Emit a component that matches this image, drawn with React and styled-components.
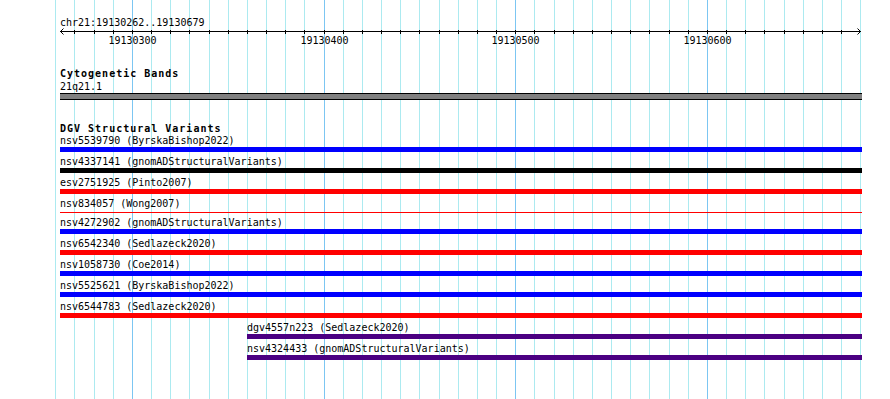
import React from "react"
import styled, { createGlobalStyle } from "styled-components"

// locus shown in the view
const LOCUS = "chr21:19130262..19130679"
const GRID_START = 19130260
const gridX = (k) => Math.round(55.3 + 19.167 * k)
const TRACK_LEFT = 60

const variants = [
  { name: "nsv5539790", source: "ByrskaBishop2022", color: "#0000ff" },
  { name: "nsv4337141", source: "gnomADStructuralVariants", color: "#000000" },
  { name: "esv2751925", source: "Pinto2007", color: "#ff0000" },
  { name: "nsv834057", source: "Wong2007", color: "#ff0000", thin: true },
  { name: "nsv4272902", source: "gnomADStructuralVariants", color: "#0000ff" },
  { name: "nsv6542340", source: "Sedlazeck2020", color: "#ff0000" },
  { name: "nsv1058730", source: "Coe2014", color: "#0000ff" },
  { name: "nsv5525621", source: "ByrskaBishop2022", color: "#0000ff" },
  { name: "nsv6544783", source: "Sedlazeck2020", color: "#ff0000" },
  { name: "dgv4557n223", source: "Sedlazeck2020", color: "#4b0082", offset: 187 },
  { name: "nsv4324433", source: "gnomADStructuralVariants", color: "#4b0082", offset: 187 },
]

const GlobalStyle = createGlobalStyle`
  html, body { margin: 0; padding: 0; background: #ffffff; }
  body { font-family: "DejaVu Sans Mono", "Liberation Mono", monospace; color: #000; }
`

const Page = styled.div`
  position: relative;
  width: 890px;
  height: 399px;
  overflow: hidden;
  background: #ffffff;
`

const Backdrop = styled.svg`
  position: absolute;
  left: 0;
  top: 0;
  z-index: 0;
`

const Content = styled.div`
  position: relative;
  z-index: 1;
  padding: 16px 28px 0 ${TRACK_LEFT}px;
  font-size: 10px;
  line-height: 12px;
  white-space: pre;
`

// text lines keep a 12px slot but sit a pixel lower in it
const TextLine = styled.div`
  height: 12px;
  line-height: 14px;
`

const Locus = styled(TextLine)``

const Ruler = styled.div`
  position: relative;
  height: 39px;
`

const TickLabel = styled.span`
  position: absolute;
  top: 6px;
  line-height: 13px;
  transform: translateX(-50%);
`

const Section = styled.section`
  margin-bottom: ${(p) => p.$gap || 0}px;
`

const Title = styled(TextLine)`
  font-weight: bold;
  letter-spacing: 1px;
  margin-bottom: ${(p) => p.$after || 0}px;
`

const BandLabel = styled(TextLine)``

const Band = styled.div`
  margin-top: 1px;
  height: 5px;
  background: #808080;
  border-top: 1px solid #000;
  border-bottom: 1px solid #000;
`

const Row = styled.div`
  padding-left: ${(p) => p.$offset || 0}px;
  margin-bottom: 3px;
`

const Label = styled(TextLine)``

const Bar = styled.div`
  background: ${(p) => p.$color};
  height: ${(p) => (p.$thin ? 1 : 5)}px;
  margin-top: ${(p) => (p.$thin ? 3 : 1)}px;
  margin-bottom: ${(p) => (p.$thin ? 2 : 0)}px;
`

function Grid() {
  const lines = []
  const ticks = []
  for (let k = 0; k <= 42; k++) {
    const x = gridX(k)
    const major = (GRID_START + 10 * k) % 100 === 0
    lines.push(
      <rect key={"g" + k} x={x} y={0} width={1} height={399} fill={major ? "#7cc6f2" : "#aceaf0"} />
    )
    if (k >= 1 && k <= 41) ticks.push(<rect key={"t" + k} x={x} y={30} width={1} height={4} fill="#000" />)
  }
  return (
    <Backdrop width="890" height="399" viewBox="0 0 890 399">
      {lines}
      <rect x={60} y={31} width={801} height={1} fill="#000" />
      {ticks}
      <path d="M63.5 28.5 L60.5 31.5 L63.5 34.5 M857.5 28.5 L860.5 31.5 L857.5 34.5" stroke="#000" strokeWidth="1" fill="none" />
    </Backdrop>
  )
}

export default function App() {
  const majors = [4, 14, 24, 34]
  return (
    <Page>
      <GlobalStyle />
      <Grid />
      <Content>
        <Locus>{LOCUS}</Locus>
        <Ruler>
          {majors.map((k) => (
            <TickLabel key={k} style={{ left: gridX(k) + 0.5 - TRACK_LEFT }}>
              {GRID_START + 10 * k}
            </TickLabel>
          ))}
        </Ruler>

        <Section $gap={22}>
          <Title $after={1}>Cytogenetic Bands</Title>
          <BandLabel>21q21.1</BandLabel>
          <Band />
        </Section>

        <Section>
          <Title>DGV Structural Variants</Title>
          {variants.map((v) => (
            <Row key={v.name} $offset={v.offset}>
              <Label>{`${v.name} (${v.source})`}</Label>
              <Bar $color={v.color} $thin={v.thin} />
            </Row>
          ))}
        </Section>
      </Content>
    </Page>
  )
}
